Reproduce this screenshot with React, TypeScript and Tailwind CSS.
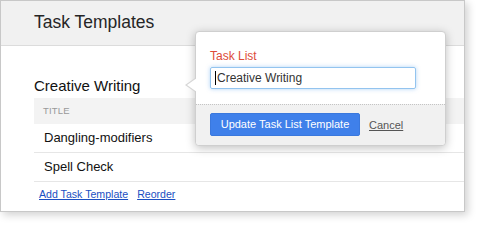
import React from 'react';

const rows = ['Dangling-modifiers', 'Spell Check'];

export default function App() {
  return (
    <div className="relative w-[480px] h-[226px] bg-white font-['Liberation_Sans',Arial,sans-serif] text-[#222] overflow-hidden">
      {/* main card */}
      <div className="w-[465px] h-[212px] border border-[#c8c8c8] bg-white shadow-[3px_3px_8px_rgba(0,0,0,0.18)] flex flex-col">
        <div className="h-[45px] shrink-0 bg-[#f1f1f1] border-b border-[#dcdcdc] flex items-center pl-[33px]">
          <h1 className="text-[17.5px] leading-none text-[#262626]">Task Templates</h1>
        </div>
        <div className="flex-1 pl-[33px] pt-[31px]">
          <h2 className="text-[15px] leading-[18px] mb-[3px] text-[#111]">Creative Writing</h2>
          <div className="h-[26px] bg-[#f3f3f3] flex items-center pl-[9px]">
            <span className="text-[9.5px] text-[#999] uppercase tracking-[0.2px]">Title</span>
          </div>
          {rows.map((r) => (
            <div key={r} className="h-[29px] border-b border-[#e6e6e6] flex items-center pl-[10px] text-[13px] text-[#111]">
              {r}
            </div>
          ))}
          <div className="flex gap-[9px] pl-[5px] pt-[5px] text-[10.6px] leading-[14px]">
            <a className="text-[#1a4fc2] underline cursor-pointer">Add Task Template</a>
            <a className="text-[#1a4fc2] underline cursor-pointer">Reorder</a>
          </div>
        </div>
      </div>

      {/* edit popup */}
      <div className="absolute left-[195px] top-[31px] w-[251px] h-[115px] bg-white border border-[#cfcfcf] rounded-[4px] shadow-[0_2px_10px_rgba(0,0,0,0.25)] flex flex-col">
        <span className="absolute left-[-11px] top-[46px] w-0 h-0 border-y-[7px] border-y-transparent border-r-[10px] border-r-[#d6d6d6]" />
        <span className="absolute left-[-9px] top-[46px] w-0 h-0 border-y-[7px] border-y-transparent border-r-[10px] border-r-white" />
        <div className="pl-[14px] pt-[17px] pb-[15px]">
          <div className="text-[12px] leading-[14px] text-[#dd4b39] mb-[4px]">Task List</div>
          <div className="w-[206px] h-[22px] border border-[#93c4ef] rounded-[2px] shadow-[0_0_4px_rgba(100,170,240,0.5)] flex items-center pl-[4px] text-[12px] text-[#333]">
            <span className="w-px h-[14px] bg-black mr-px" />
            Creative Writing
          </div>
        </div>
        <div className="flex-1 bg-[#f1f1f1] border-t border-dotted border-[#c4c4c4] rounded-b-[4px] flex items-start pl-[14px] pt-[8px] gap-[9px]">
          <button className="w-[150px] h-[23px] bg-[#3f80ea] border border-[#3a78dd] rounded-[2px] text-white text-[11px] leading-none">
            Update Task List Template
          </button>
          <a className="mt-[5px] text-[11px] leading-[14px] text-[#555] underline cursor-pointer">Cancel</a>
        </div>
      </div>
    </div>
  );
}
